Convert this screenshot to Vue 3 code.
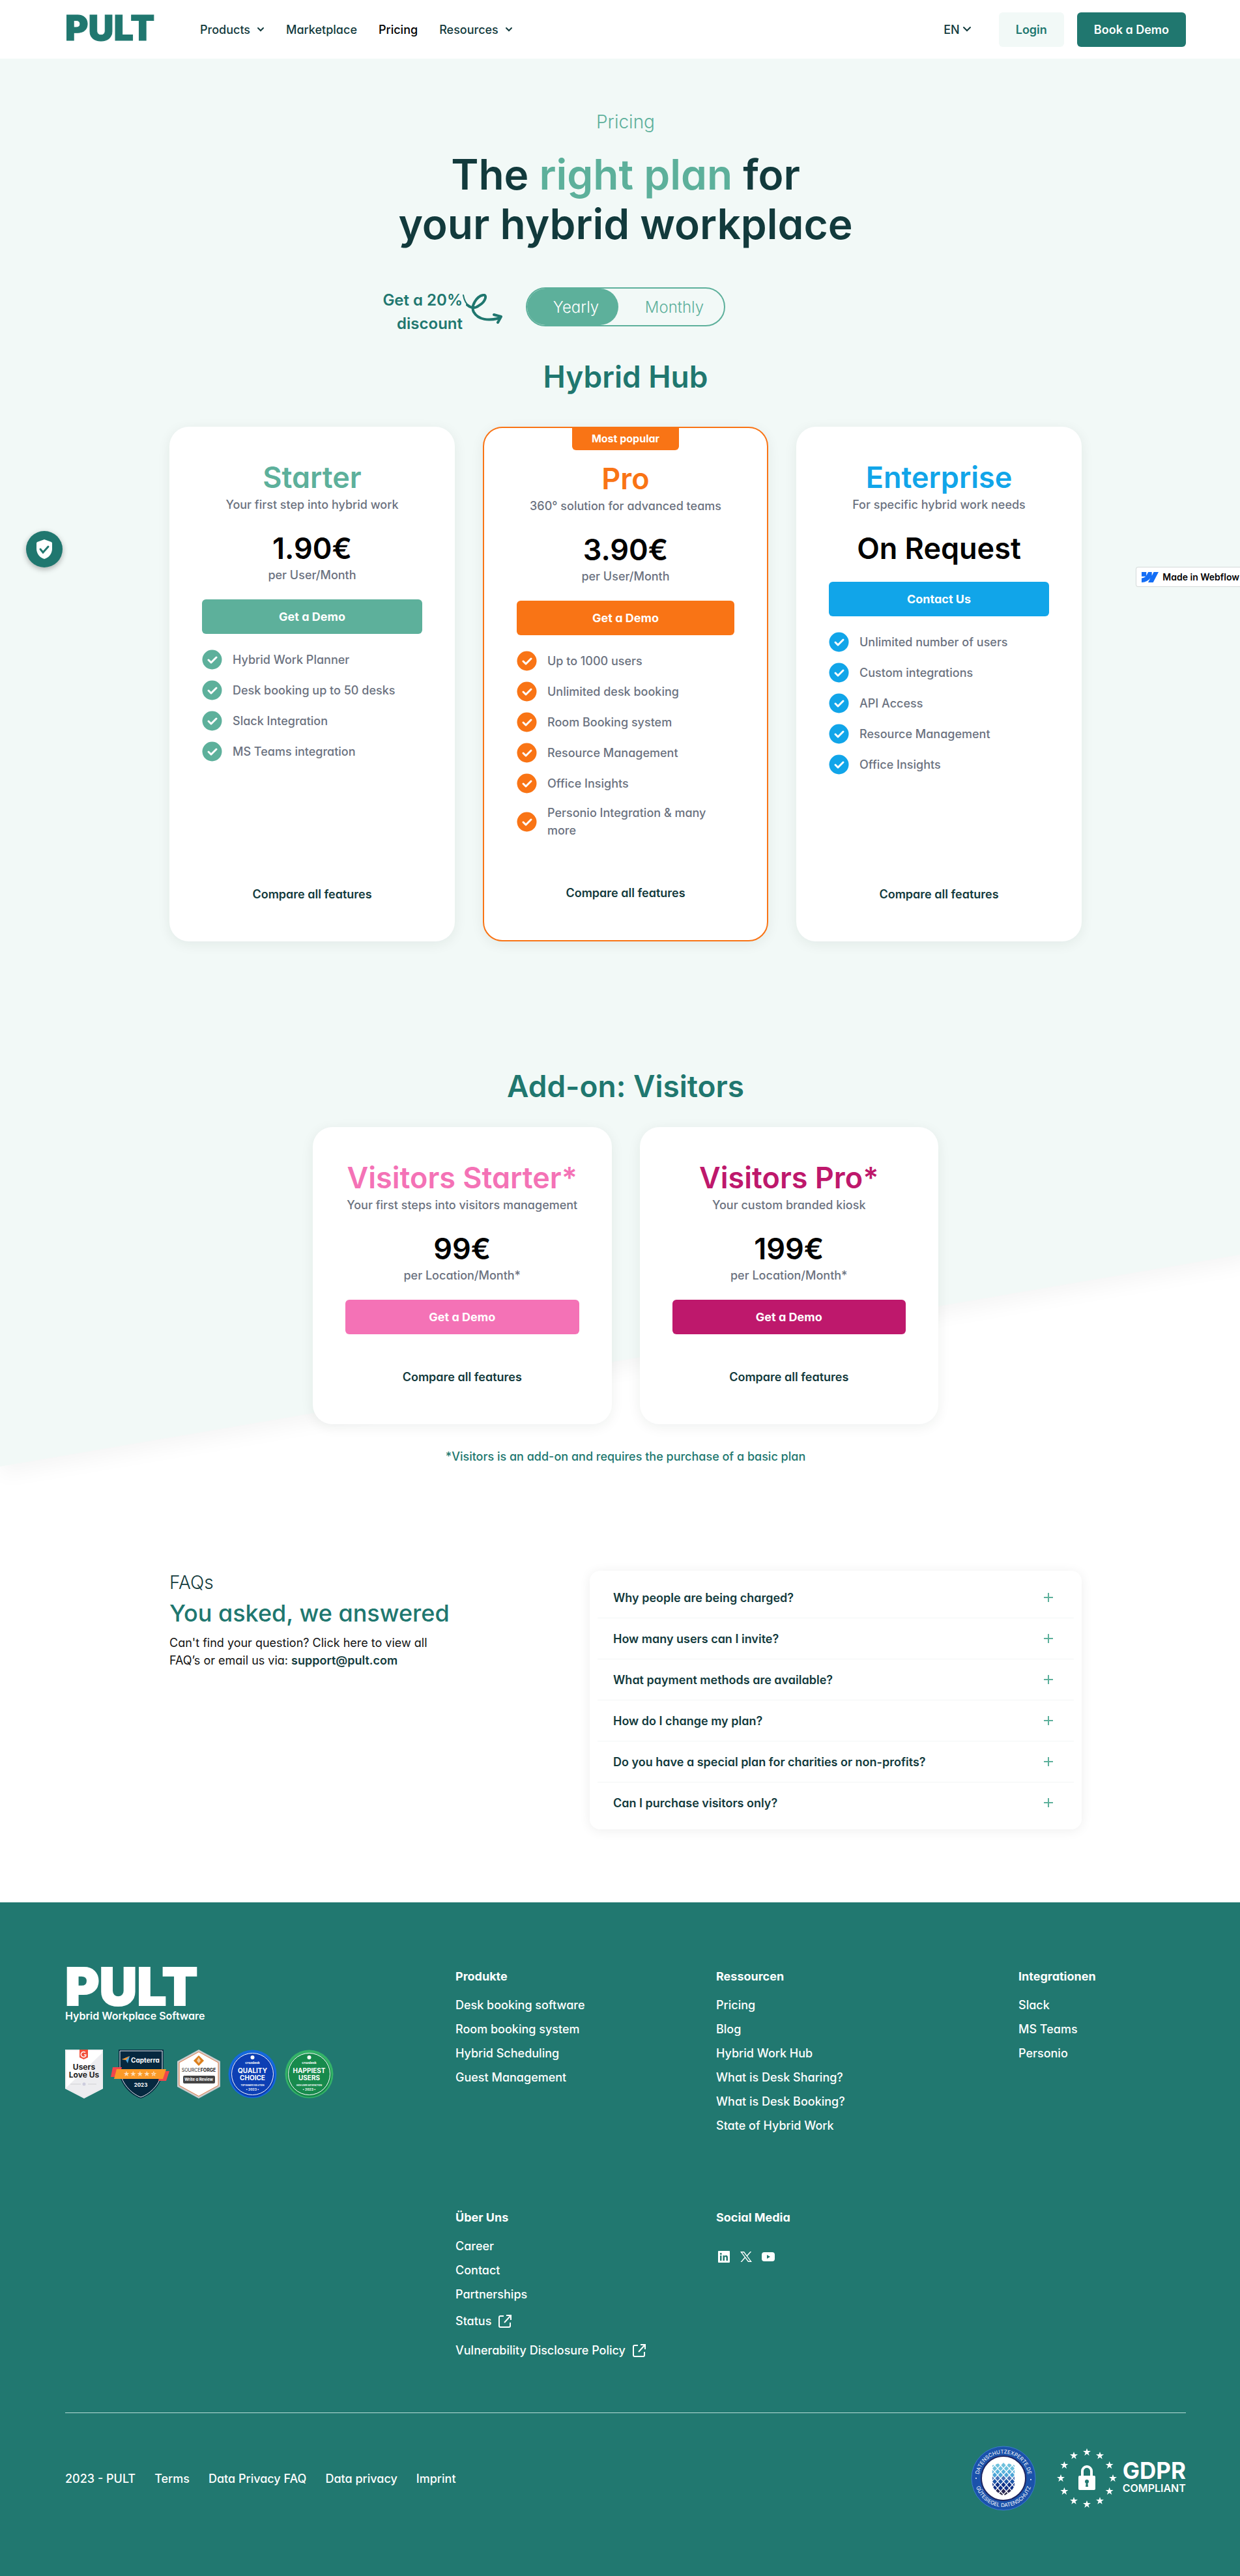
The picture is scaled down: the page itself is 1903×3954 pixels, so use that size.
<script setup>
import { ref } from 'vue'

const billing = ref('yearly')

const plans = [
  {
    name: 'Starter', tone: 'mint', sub: 'Your first step into hybrid work', price: '1.90€', unit: 'per User/Month', cta: 'Get a Demo',
    features: ['Hybrid Work Planner', 'Desk booking up to 50 desks', 'Slack Integration', 'MS Teams integration']
  },
  {
    name: 'Pro', tone: 'orange', badge: 'Most popular', sub: '360° solution for advanced teams', price: '3.90€', unit: 'per User/Month', cta: 'Get a Demo',
    features: ['Up to 1000 users', 'Unlimited desk booking', 'Room Booking system', 'Resource Management', 'Office Insights', 'Personio Integration & many more']
  },
  {
    name: 'Enterprise', tone: 'blue', sub: 'For specific hybrid work needs', price: 'On Request', cta: 'Contact Us',
    features: ['Unlimited number of users', 'Custom integrations', 'API Access', 'Resource Management', 'Office Insights']
  }
]

const addons = [
  { name: 'Visitors Starter*', tone: 'pink', sub: 'Your first steps into visitors management', price: '99€', unit: 'per Location/Month*' },
  { name: 'Visitors Pro*', tone: 'magenta', sub: 'Your custom branded kiosk', price: '199€', unit: 'per Location/Month*' }
]

const faqs = [
  'Why people are being charged?',
  'How many users can I invite?',
  'What payment methods are available?',
  'How do I change my plan?',
  'Do you have a special plan for charities or non-profits?',
  'Can I purchase visitors only?'
]

const columns = [
  { title: 'Produkte', links: ['Desk booking software', 'Room booking system', 'Hybrid Scheduling', 'Guest Management'] },
  { title: 'Ressourcen', links: ['Pricing', 'Blog', 'Hybrid Work Hub', 'What is Desk Sharing?', 'What is Desk Booking?', 'State of Hybrid Work'] },
  { title: 'Integrationen', links: ['Slack', 'MS Teams', 'Personio'] },
  { title: 'Über Uns', links: ['Career', 'Contact', 'Partnerships'], external: ['Status', 'Vulnerability Disclosure Policy'] }
]

const legal = ['Terms', 'Data Privacy FAQ', 'Data privacy', 'Imprint']

const roundAwards = [
  { a: 'QUALITY', b: 'CHOICE', c: 'TOP RANKED SOLUTION', inner: '#0d3fb4', outer: '#1468dc' },
  { a: 'HAPPIEST', b: 'USERS', c: 'HIGH USER SATISFACTION', inner: '#178a4c', outer: '#34b368' }
]

// Twelve stars on a circle around the padlock
const starAngles = Array.from({ length: 12 }, (_, i) => i * 30)
const starAt = (deg) => {
  const a = (deg * Math.PI) / 180
  return `translate(${(46 + 40 * Math.sin(a)).toFixed(2)} ${(46 - 40 * Math.cos(a)).toFixed(2)})`
}

// Diamond lattice inside the privacy seal, clipped to a shield shape
const sealColors = ['#6dc0dd', '#58b2dc', '#4aa3d6', '#4a72b8', '#1d55a8', '#0d2f86', '#2b2a55', '#2b2a45']
const diamonds = []
for (let r = 0; r < 10; r++) {
  for (let c = -2; c <= 2; c++) {
    const x = 50 + c * 9 + (r % 2 ? 4.5 : 0)
    diamonds.push({ x, y: 30 + r * 5, fill: sealColors[Math.min(7, Math.floor(r / 1.2))] })
  }
}
</script>

<template>
  <div class="viewport">
    <div class="page">
      <header class="header">
        <a href="#" class="logo" aria-label="PULT home">PULT</a>
        <nav class="nav">
          <a href="#">Products <svg class="chev" viewBox="0 0 12 8"><path d="M2 2l4 4 4-4" /></svg></a>
          <a href="#">Marketplace</a>
          <a href="#" class="current">Pricing</a>
          <a href="#">Resources <svg class="chev" viewBox="0 0 12 8"><path d="M2 2l4 4 4-4" /></svg></a>
        </nav>
        <button class="lang" type="button">EN <svg class="chev big" viewBox="0 0 14 10"><path d="M2 2l5 5 5-5" /></svg></button>
        <button class="btn login" type="button">Login</button>
        <button class="btn book" type="button">Book a Demo</button>
      </header>

      <main class="main">
        <div class="slant"></div>
        <section class="hero">
          <p class="kicker">Pricing</p>
          <h1>The <span>right plan</span> for<br />your hybrid workplace</h1>
          <div class="billing">
            <div class="discount">
              <p>Get a 20%<br />discount</p>
              <svg class="curl" viewBox="0 0 62 48">
                <path class="thin" d="M1 2C4 20 16 24 24 19" />
                <path d="M7 17C14 23 20 22 25 18C36 12 38 0 31 2C22 4 12 18 17 28C24 40 40 42 57 37" />
                <path d="M48 32L59 35L54 44" />
              </svg>
            </div>
            <div class="toggle" role="radiogroup" aria-label="Billing period">
              <label :class="{ on: billing === 'yearly' }"><input v-model="billing" type="radio" name="billing" value="yearly" />Yearly</label>
              <label :class="{ on: billing === 'monthly' }"><input v-model="billing" type="radio" name="billing" value="monthly" />Monthly</label>
            </div>
            <div></div>
          </div>
        </section>

        <section class="plans">
          <h2>Hybrid Hub</h2>
          <div class="cards three">
            <article v-for="p in plans" :key="p.name" class="card" :class="[p.tone, { popular: p.badge }]">
              <span v-if="p.badge" class="badge">{{ p.badge }}</span>
              <h3>{{ p.name }}</h3>
              <p class="sub">{{ p.sub }}</p>
              <p class="price">{{ p.price }}</p>
              <p v-if="p.unit" class="sub">{{ p.unit }}</p>
              <button class="cta" type="button">{{ p.cta }}</button>
              <ul class="features">
                <li v-for="f in p.features" :key="f">
                  <svg class="tick" viewBox="0 0 31 31"><circle cx="15.500" cy="15.500" r="15" /><path d="M10 16l4 4 8-8" /></svg>
                  <span>{{ f }}</span>
                </li>
              </ul>
              <a href="#" class="compare">Compare all features</a>
            </article>
          </div>
        </section>

        <section class="addons">
          <h2>Add-on: Visitors</h2>
          <div class="cards two">
            <article v-for="p in addons" :key="p.name" class="card" :class="p.tone">
              <h3>{{ p.name }}</h3>
              <p class="sub">{{ p.sub }}</p>
              <p class="price">{{ p.price }}</p>
              <p class="sub">{{ p.unit }}</p>
              <button class="cta" type="button">Get a Demo</button>
              <a href="#" class="compare">Compare all features</a>
            </article>
          </div>
          <p class="note">*Visitors is an add-on and requires the purchase of a basic plan</p>
        </section>
      </main>

      <section class="faq">
        <div class="intro">
          <p class="faq-kicker">FAQs</p>
          <h2>You asked, we answered</h2>
          <p class="faq-text">Can't find your question? Click here to view all<br />FAQ’s or email us via: <a href="#">support@pult.com</a></p>
        </div>
        <div class="questions">
          <button v-for="q in faqs" :key="q" type="button">
            {{ q }}
            <svg viewBox="0 0 14 14"><path d="M7 0v14M0 7h14" /></svg>
          </button>
        </div>
      </section>

      <footer class="footer">
        <div class="footer-top">
          <div class="brand">
            <p class="logo large">PULT</p>
            <p class="tagline">Hybrid Workplace Software</p>
            <div class="awards">
              <svg width="58" height="75" viewBox="0 0 58 75">
                <path d="M0 0H58V60L29 75L0 60Z" fill="#fff" />
                <path d="M57 5V59L29 74L1 59Z" fill="#ededf0" />
                <path d="M1 1H57V59L29 74L1 59Z" fill="none" stroke="#e4e4e8" />
                <path d="M22 0H35V12L28.500 15L22 12Z" fill="#f2513b" />
                <path d="M31 4.500A4 4 0 1 0 32 9M29 8h3.500" fill="none" stroke="#fff" stroke-width="1.500" />
                <text x="29" y="31" font-size="12">Users</text>
                <text x="29" y="43" font-size="12">Love Us</text>
                <path d="M8 53H24M35 53H48" stroke="#d0d0d4" />
                <circle cx="29" cy="53" r="2.500" fill="#ccccdd" />
              </svg>
              <svg width="90" height="75" viewBox="0 0 90 75" class="light">
                <path d="M12 0H81V28C81 52 62 70 46 75C30 70 12 52 12 28Z" fill="#06283f" />
                <path d="M14 2H79V28C79 51 61 68 46 73C32 68 14 51 14 28Z" fill="none" stroke="#e8eef2" />
                <path d="M17 15L29 10L26 21L23 16Z" fill="#4aa3dc" /><path d="M17 15L29 10L23 16Z" fill="#f79326" />
                <text x="53" y="20" font-size="10">Capterra</text>
                <path d="M3 27H17L13 42H0Z" fill="#f0464b" /><path d="M76 33H90L85 48H73Z" fill="#f0464b" />
                <path d="M9 30H85L80 45H5Z" fill="#fb9a28" />
                <text x="45" y="41" font-size="10" fill-opacity=".7">★★★★☆</text>
                <text x="46" y="57" font-size="8">2023</text>
              </svg>
              <svg width="66" height="75" viewBox="0 0 66 75">
                <path d="M33 0L66 18V57L33 75L0 57V18Z" fill="#c9cacc" />
                <path d="M33 3.500L63 20V55L33 71.500L3 55V20Z" fill="#fff" stroke="#e27a43" />
                <path d="M33 9L41 17L33 25L25 17Z" fill="#dc7f1c" />
                <path d="M33 12L30 17L33 21L36 17Z" fill="#fff" fill-opacity=".6" />
                <text x="33" y="34" font-size="7"><tspan font-weight="400">SOURCE</tspan>FORGE</text>
                <rect x="9" y="40" width="49" height="12" rx="2" fill="#444" />
                <text x="33" y="48" font-size="6" class="on-dark">Write a Review</text>
              </svg>
              <svg v-for="b in roundAwards" :key="b.a" width="75" height="75" viewBox="0 0 75 75" class="light">
                <circle cx="37.500" cy="37.500" r="37" :fill="b.outer" />
                <circle cx="37.500" cy="39" r="34" :fill="b.inner" />
                <circle cx="37.500" cy="37.500" r="32" fill="none" stroke="#fff" />
                <circle cx="37.500" cy="12" r="3" fill="#fff" />
                <text x="37.500" y="22" font-size="5">crozdesk</text>
                <text x="37.500" y="36" font-size="10">{{ b.a }}</text>
                <text x="37.500" y="47" font-size="10">{{ b.b }}</text>
                <text x="37.500" y="56" font-size="3">{{ b.c }}</text>
                <text x="37.500" y="63" font-size="5">• 2023 •</text>
              </svg>
            </div>
          </div>

          <div class="columns">
            <div v-for="c in columns" :key="c.title" class="column">
              <h4>{{ c.title }}</h4>
              <a v-for="l in c.links" :key="l" href="#">{{ l }}</a>
              <a v-for="l in c.external" :key="l" href="#" class="external">{{ l }}
                <svg viewBox="0 0 22 22"><path d="M9 3H4Q2 3 2 5V18Q2 20 4 20H17Q19 20 19 18V13M13 2H20V9M20 2L10 13" /></svg>
              </a>
            </div>
            <div class="column">
              <h4>Social Media</h4>
              <div class="social">
                <a href="#" aria-label="LinkedIn"><svg viewBox="0 0 20 20"><path fill-rule="evenodd" d="M2 1H18Q19 1 19 2V18Q19 19 18 19H2Q1 19 1 18V2Q1 1 2 1ZM4 8V16H6.500V8ZM5.200 4A1.400 1.400 0 1 0 5.300 7A1.400 1.400 0 1 0 5.200 4ZM8.500 8V16H11V11.500C11 9.500 13.500 9.500 13.500 11.500V16H16V11C16 7.500 12.300 7 11 9V8Z" /></svg></a>
                <a href="#" aria-label="X"><svg viewBox="0 0 20 20"><path fill-rule="evenodd" d="M1 2H7L11.200 7.800L16.300 2H18.200L12.100 9L19 18H13L8.600 12L3.400 18H1.500L7.700 10.800ZM3.800 3.400L13.700 16.600H16.200L6.300 3.400Z" /></svg></a>
                <a href="#" aria-label="YouTube"><svg viewBox="0 0 20 20"><path fill-rule="evenodd" d="M4 3H16Q20 3 20 7V13Q20 17 16 17H4Q0 17 0 13V7Q0 3 4 3ZM8 7V13L13 10Z" /></svg></a>
              </div>
            </div>
          </div>
        </div>

        <div class="footer-bottom">
          <div class="legal">
            <span>2023 - PULT</span>
            <a v-for="l in legal" :key="l" href="#">{{ l }}</a>
          </div>
          <div class="seals">
            <svg width="100" height="100" viewBox="0 0 100 100" class="seal">
              <defs>
                <path id="arc-top" d="M12 50A38 38 0 0 1 88 50" />
                <path id="arc-bottom" d="M6 50A44 44 0 0 0 94 50" />
                <clipPath id="seal-shield"><path d="M33 30L50 25L67 30V58C67 67 58 73 50 77C42 73 33 67 33 58Z" /></clipPath>
              </defs>
              <circle cx="50" cy="50" r="49" fill="#1b52ab" stroke="#3b7bd0" />
              <circle cx="50" cy="50" r="34" fill="#fff" stroke="#1f2560" stroke-width="2" />
              <g clip-path="url(#seal-shield)">
                <path v-for="(d, i) in diamonds" :key="i" :transform="`translate(${d.x} ${d.y})`" d="M0-4L3.600 0L0 4L-3.600 0Z" :fill="d.fill" />
              </g>
              <text><textPath href="#arc-top" startOffset="50%">DATENSCHUTZEXPERTE.DE</textPath></text>
              <text><textPath href="#arc-bottom" startOffset="50%">GÜTESIEGEL DATENSCHUTZ</textPath></text>
              <circle cx="8" cy="50" r="1" fill="#fff" /><circle cx="92" cy="52" r="1" fill="#fff" />
            </svg>
            <div class="gdpr">
              <svg width="92" height="92" viewBox="0 0 92 92">
                <path v-for="a in starAngles" :key="a" :transform="starAt(a)" d="M0-6L1.500-2H6L2.300 .8L3.700 5.200L0 2.500L-3.700 5.200L-2.300 .8L-6-2H-1.500Z" fill="#fff" />
                <path d="M39 42V35A7 7 0 0 1 53 35V42" fill="none" stroke="#fff" stroke-width="4" />
                <rect x="33" y="42" width="26" height="22" rx="2" fill="#fff" />
                <circle cx="46" cy="51" r="3" fill="#217870" /><path d="M45 51H47L48 59H44Z" fill="#217870" />
              </svg>
              <p><strong>GDPR</strong><span>COMPLIANT</span></p>
            </div>
          </div>
        </div>
      </footer>
    </div>

    <button class="shield" type="button" aria-label="Privacy settings">
      <svg viewBox="0 0 24 30"><path d="M12 0L23 4Q24 5 24 6V14C24 22 19 28 12 30C5 28 0 22 0 14V6Q0 5 1 4Z" fill="#fff" /><path d="M6 15L10 20L18 11" fill="none" stroke="#20776f" stroke-width="3" stroke-linecap="round" /></svg>
    </button>
    <a href="#" class="webflow"><svg viewBox="0 0 26 16"><path d="M26 0L17.700 16H10L13.400 9.400C10.500 13.200 6 15.600 0 16V9.500S4 9.300 6.300 6.800H0V0H7.200V5.800L10.200 0H15.700V5.700L18.600 0Z" fill="#146ef5" /></svg>Made in Webflow</a>
  </div>
</template>

<style>
body {
  margin: 0;
}
</style>

<style scoped>
.viewport {
  position: relative;
  overflow: hidden;
  background: #fff;
  color: #123a3c;
  font-family: Inter, "Liberation Sans", sans-serif;
  font-size: 18px;
  font-weight: 500;
  line-height: 27px;
  font-feature-settings: "cv11";
}
.viewport * {
  box-sizing: border-box;
}
.page {
  width: calc(100% + 17px);
}
p, h1, h2, h3, h4, ul {
  margin: 0;
  padding: 0;
}
a {
  color: inherit;
  text-decoration: none;
}
button {
  border: 0;
  background: none;
  padding: 0;
  font: inherit;
  color: inherit;
  font-feature-settings: inherit;
  cursor: pointer;
}

.header {
  position: relative;
  z-index: 2;
  display: flex;
  align-items: center;
  height: 90px;
  padding: 0 100px;
  background: #fff;
}
.logo {
  width: 141px;
  margin-top: -4px;
  font-size: 54px;
  font-weight: 900;
  line-height: 56px;
  color: #20776f;
  -webkit-text-stroke: 1px currentColor;
}
.nav {
  display: flex;
  gap: 33px;
  margin-left: 66px;
}
.nav a {
  display: flex;
  align-items: center;
  gap: 10px;
}
.nav .current {
  color: #000;
}
.chev {
  width: 12px;
  height: 8px;
  fill: none;
  stroke: #123a3c;
  stroke-width: 2;
  stroke-linecap: round;
}
.chev.big {
  width: 14px;
  height: 10px;
}
.lang {
  display: flex;
  align-items: center;
  gap: 4px;
  margin-left: auto;
  margin-right: 42px;
}
.btn {
  height: 53px;
  border-radius: 6px;
  padding: 0 26px;
  font-weight: 600;
}
.login {
  margin-right: 20px;
  background: #f2f9f7;
  color: #20776f;
}
.book {
  background: #20776f;
  color: #fff;
}

.main {
  position: relative;
}
.slant {
  position: absolute;
  inset: -400px 0 162px;
  background: #f2f9f7;
  box-shadow: 0 14px 30px rgba(0, 0, 0, 0.04);
  transform: skewY(-9.7deg);
}
.hero,
.plans,
.addons {
  position: relative;
  text-align: center;
}
.hero {
  padding-top: 76px;
}
.kicker {
  font-size: 28px;
  font-weight: 300;
  line-height: 42px;
  color: #5db09b;
}
h1 {
  margin-top: 22px;
  font-size: 64px;
  font-weight: 600;
  line-height: 76px;
}
h1 span {
  color: #5db09b;
}
.billing {
  display: grid;
  grid-template-columns: 1fr auto 1fr;
  align-items: start;
  margin-top: 59px;
}
.discount {
  display: flex;
  justify-content: flex-end;
  margin-right: 35px;
  padding-top: 2px;
  font-size: 24px;
  font-weight: 600;
  line-height: 36px;
  text-align: right;
  color: #20776f;
}
.curl {
  width: 62px;
  height: 48px;
  margin-top: 8px;
  fill: none;
  stroke: #20776f;
  stroke-width: 4;
  stroke-linecap: round;
  stroke-linejoin: round;
}
.curl .thin {
  stroke-width: 2;
}
.toggle {
  display: flex;
  width: 306px;
  height: 60px;
  border: 2px solid #5db09b;
  border-radius: 30px;
  font-size: 24px;
  font-weight: 300;
  color: #5db09b;
}
.toggle label {
  display: flex;
  flex: 1;
  align-items: center;
  justify-content: center;
  padding-left: 10px;
  border-radius: 28px;
  cursor: pointer;
}
.toggle label:first-child {
  flex: 0 0 140px;
}
.toggle label.on {
  background: #5db09b;
  color: #fff;
}
.toggle input {
  position: absolute;
  opacity: 0;
}

.plans h2,
.addons h2 {
  font-size: 46px;
  font-weight: 600;
  line-height: 56px;
  color: #20776f;
}
.plans {
  padding-top: 35px;
}
.cards {
  display: grid;
  gap: 43px;
  margin: 0 auto;
}
.three {
  grid-template-columns: repeat(3, minmax(0, 1fr));
  max-width: 1400px;
  margin-top: 49px;
}
.two {
  grid-template-columns: repeat(2, minmax(0, 1fr));
  max-width: 960px;
  margin-top: 35px;
}
.card {
  position: relative;
  display: flex;
  flex-direction: column;
  padding: 50px;
  border-radius: 30px;
  background: #fff;
  box-shadow: 0 4px 20px rgba(0, 40, 30, 0.07);
}
.mint { --tone: #5db09b; }
.orange { --tone: #f97415; }
.blue { --tone: #11a5e9; }
.pink { --tone: #f472b6; }
.magenta { --tone: #be186c; }
.popular {
  border: 2px solid var(--tone);
}
.badge {
  position: absolute;
  top: -2px;
  left: 50%;
  width: 164px;
  margin-left: -82px;
  border-radius: 0 0 6px 6px;
  background: var(--tone);
  color: #fff;
  font-size: 16px;
  font-weight: 700;
  line-height: 36px;
}
h3 {
  font-size: 45px;
  font-weight: 600;
  line-height: 56px;
  color: var(--tone);
  white-space: nowrap;
}
.sub {
  color: #6b7280;
  white-space: nowrap;
}
.price {
  margin-top: 27px;
  font-size: 45px;
  font-weight: 600;
  line-height: 54px;
  color: #000;
}
.cta {
  height: 53px;
  margin-top: 24px;
  border-radius: 6px;
  background: var(--tone);
  color: #fff;
  font-weight: 700;
}
.features {
  display: flex;
  flex-direction: column;
  gap: 16px;
  margin-top: 24px;
  padding-bottom: 61px;
  list-style: none;
  text-align: left;
  color: #6b7280;
}
.features li {
  display: flex;
  align-items: center;
  gap: 16px;
  min-height: 31px;
}
.tick {
  flex: none;
  width: 31px;
  height: 31px;
  fill: var(--tone);
}
.tick path {
  fill: none;
  stroke: #fff;
  stroke-width: 3;
  stroke-linecap: round;
  stroke-linejoin: round;
}
.compare {
  margin-top: auto;
  font-weight: 600;
  line-height: 44px;
}
.addons {
  padding-top: 194px;
}
.addons .compare {
  margin-top: 44px;
}
.note {
  margin-top: 36px;
  color: #20776f;
}

.faq {
  position: relative;
  display: flex;
  justify-content: space-between;
  align-items: flex-start;
  max-width: 1400px;
  margin: 162px auto 112px;
}
.faq-kicker {
  font-size: 28px;
  font-weight: 300;
  line-height: 36px;
}
.faq h2 {
  margin-top: 4px;
  font-size: 36px;
  font-weight: 500;
  line-height: 50px;
  color: #20776f;
}
.faq-text {
  margin-top: 7px;
  font-weight: 400;
  color: #111;
}
.faq-text a {
  font-weight: 600;
  color: #123a3c;
}
.questions {
  width: 755px;
  padding: 10px 12px 9px;
  border-radius: 16px;
  box-shadow: 0 2px 18px rgba(0, 0, 0, 0.07);
}
.questions button {
  display: flex;
  align-items: center;
  justify-content: space-between;
  width: 100%;
  height: 63px;
  padding: 0 32px 0 24px;
  border-bottom: 1px solid #f3f6f6;
  font-weight: 600;
  text-align: left;
}
.questions button:last-child {
  border-bottom-color: transparent;
}
.questions svg {
  width: 14px;
  height: 14px;
  stroke: #5db09b;
  stroke-width: 2;
}

.footer {
  position: relative;
  padding: 101px 100px 100px;
  background: #217870;
  color: #fff;
}
.footer-top {
  display: flex;
}
.brand {
  width: 599px;
}
.logo.large {
  width: auto;
  margin-top: 0;
  font-size: 80px;
  color: #fff;
  -webkit-text-stroke: 2px currentColor;
}
.tagline {
  margin-top: 5px;
  font-size: 16px;
  font-weight: 600;
  line-height: 24px;
}
.awards {
  display: flex;
  gap: 12px;
  margin-top: 40px;
}
.awards text {
  text-anchor: middle;
  font-weight: 700;
  fill: #222;
}
.awards .light text,
.awards .on-dark {
  fill: #fff;
}
.columns {
  display: grid;
  flex: 1;
  grid-template-columns: 400fr 464fr 257fr;
  gap: 115px 0;
}
.column {
  display: flex;
  flex-direction: column;
  align-items: flex-start;
  gap: 10px;
  white-space: nowrap;
}
h4 {
  margin-bottom: 7px;
  font-size: 18px;
  font-weight: 700;
  line-height: 26px;
}
.external {
  display: flex;
  align-items: center;
  gap: 10px;
  height: 35px;
}
.external svg {
  width: 22px;
  height: 22px;
  fill: none;
  stroke: #fff;
  stroke-width: 2;
}
.social {
  display: flex;
  gap: 14px;
  padding: 20px 2px;
}
.social svg {
  display: block;
  width: 20px;
  height: 20px;
  fill: #fff;
}
.footer-bottom {
  display: flex;
  align-items: center;
  justify-content: space-between;
  margin-top: 78px;
  padding-top: 50px;
  border-top: 1px solid #b4dad4;
}
.legal {
  display: flex;
  gap: 29px;
}
.seals {
  display: flex;
  align-items: center;
  gap: 32px;
}
.seal text {
  fill: #fff;
  font-size: 8px;
  font-weight: 400;
  text-anchor: middle;
}
.gdpr {
  display: flex;
  align-items: center;
  gap: 9px;
}
.gdpr strong,
.gdpr span {
  display: block;
}
.gdpr strong {
  font-size: 35px;
  line-height: 30px;
}
.gdpr span {
  font-size: 16px;
  font-weight: 600;
  line-height: 24px;
}

.shield {
  position: absolute;
  top: 815px;
  left: 40px;
  display: flex;
  align-items: center;
  justify-content: center;
  width: 56px;
  height: 56px;
  border-radius: 50%;
  background: #20776f;
  box-shadow: 0 3px 8px rgba(0, 0, 0, 0.3);
}
.shield svg {
  width: 24px;
  height: 30px;
}
.webflow {
  position: absolute;
  top: 871px;
  right: 0;
  display: flex;
  align-items: center;
  gap: 6px;
  height: 29px;
  padding: 0 1px 0 8px;
  border-radius: 3px 0 0 3px;
  background: #fff;
  box-shadow: 0 0 0 1px rgba(0, 0, 0, 0.12);
  color: #000;
  font-size: 14px;
  font-weight: 600;
}
.webflow svg {
  width: 26px;
  height: 16px;
}
</style>
